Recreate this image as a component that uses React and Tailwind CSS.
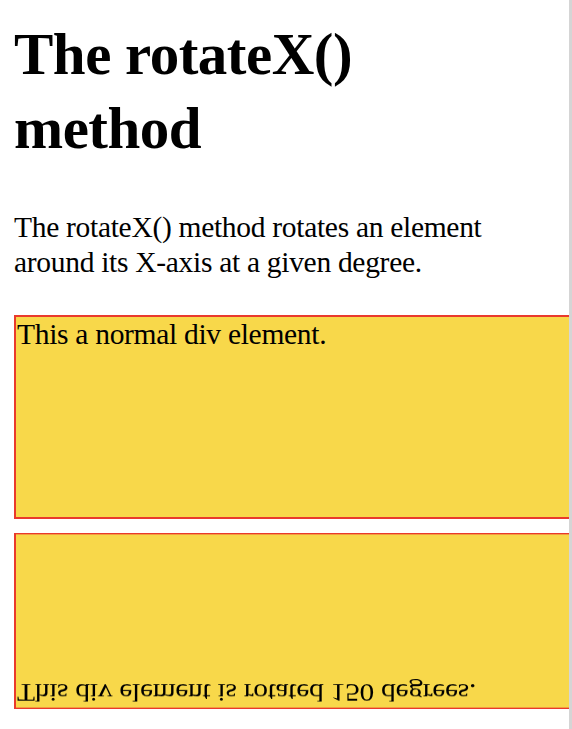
import React from 'react'

const App = () => {
  return (
    <div className="relative min-h-[729px] overflow-hidden bg-white text-black font-['Liberation_Serif',serif]">
      <div className="px-[14px]">
        <h1 className="mt-[18px] max-w-[500px] text-[59px] font-bold leading-[73.5px] tracking-[-0.5px]">The rotateX() method</h1>

        <p className="mt-[45px] text-[29.5px] leading-[35px] tracking-[-0.3px]">
          The rotateX() method rotates an element around its X-axis at a given degree.
        </p>

        <div className="mt-[35px] w-[640px]">
          <div className="h-[204px] border-2 border-[#e93a2c] bg-[#f8d84a] pl-[1px] text-[29.5px] leading-[35px] tracking-[-0.3px]">
            This a normal div element.
          </div>
          <div className="h-[204px] border-2 border-[#e93a2c] bg-[#f8d84a] pl-[1px] text-[29.5px] leading-[35px] tracking-[-0.3px] rotate-x-[150deg]">
            This div element is rotated 150 degrees.
          </div>
        </div>
      </div>

      {/* scrollbar edge */}
      <div className="absolute right-0 top-0 h-full w-[3px] bg-[#d5d5d5]" />
    </div>
  )
}

export default App
